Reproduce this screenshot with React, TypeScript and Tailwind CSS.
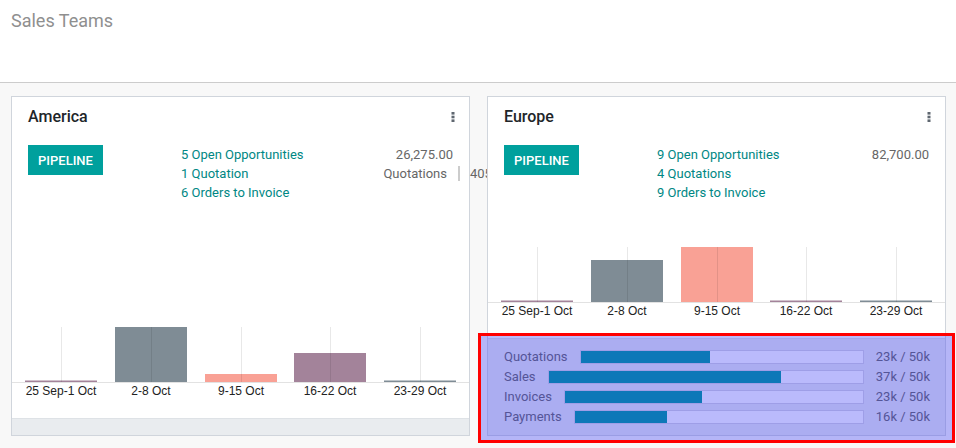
import React from 'react'

type Bar = { value: number; color: string }

const weeks = ['25 Sep-1 Oct', '2-8 Oct', '9-15 Oct', '16-22 Oct', '23-29 Oct']
const centers = [49, 139, 229, 318, 408]

const GRAY = '#7f8c95'
const SALMON = '#f9a195'
const MAUVE = '#a3839a'

const teams = [
  {
    name: 'America',
    links: ['5 Open Opportunities', '1 Quotation', '6 Orders to Invoice'],
    amount: '26,275.00',
    quotations: '405.00',
    bars: [
      { value: 1.5, color: MAUVE },
      { value: 55, color: GRAY },
      { value: 8, color: SALMON },
      { value: 29, color: MAUVE },
      { value: 1.5, color: GRAY },
    ] as Bar[],
    progress: null,
  },
  {
    name: 'Europe',
    links: ['9 Open Opportunities', '4 Quotations', '9 Orders to Invoice'],
    amount: '82,700.00',
    quotations: null,
    bars: [
      { value: 1.5, color: MAUVE },
      { value: 42, color: GRAY },
      { value: 55, color: SALMON },
      { value: 1.5, color: MAUVE },
      { value: 1.5, color: GRAY },
    ] as Bar[],
    progress: [
      { label: 'Quotations', value: 23, max: 50 },
      { label: 'Sales', value: 37, max: 50 },
      { label: 'Invoices', value: 23, max: 50 },
      { label: 'Payments', value: 16, max: 50 },
    ],
  },
]

function Dots() {
  return (
    <svg width="4" height="10" viewBox="0 0 4 10" className="-mr-[2px]">
      <rect x="0.5" y="0" width="3" height="2.6" fill="#5f6770" />
      <rect x="0.5" y="3.7" width="3" height="2.6" fill="#5f6770" />
      <rect x="0.5" y="7.4" width="3" height="2.6" fill="#5f6770" />
    </svg>
  )
}

function WeekChart({ bars }: { bars: Bar[] }) {
  const base = 55
  return (
    <svg width="457" height="91" viewBox="0 0 457 91" className="block">
      {bars.map((b, i) => (
        <rect key={i} x={centers[i] - 36} y={base - b.value} width="72" height={b.value} fill={b.color} />
      ))}
      {centers.map(c => (
        <line key={c} x1={c + 0.5} x2={c + 0.5} y1="0" y2={base} stroke="rgba(0,0,0,0.09)" strokeWidth="1" />
      ))}
      <line x1="0" x2="457" y1={base + 0.5} y2={base + 0.5} stroke="#e2e2e2" strokeWidth="1" />
      {weeks.map((w, i) => (
        <text key={w} x={centers[i]} y="68" textAnchor="middle" fontSize="12" fill="#222"
          fontFamily="'Liberation Sans', Arial, sans-serif">
          {w}
        </text>
      ))}
    </svg>
  )
}

export default function App() {
  return (
    <div className="min-h-screen bg-[#f8f8f8] font-[Roboto,sans-serif]">
      {/* Control panel */}
      <div className="h-[83px] bg-white border-b border-[#cccccc] pl-[11px] pt-[9px]">
        <h1 className="text-[18px] leading-[24px] text-[#8f8f8f]">Sales Teams</h1>
      </div>

      {/* Kanban */}
      <div className="grid grid-cols-2 gap-[17px] pl-[11px] pr-[10px] pt-[13px]">
        {teams.map(team => (
          <div key={team.name} className="relative flex flex-col bg-white border border-[#d0d5dc]">
            <div className="px-4 pt-[10px]">
              <div className="flex items-center justify-between h-5">
                <span className="text-[16px] leading-5 font-medium text-[#212529]">{team.name}</span>
                <Dots />
              </div>

              <div className="flex mt-[18px] text-[13px] leading-[19px]">
                <div className="w-[153px] flex-shrink-0">
                  <button className="w-[75px] h-[30px] bg-[#00a09d] text-white text-[13px] font-medium uppercase">
                    Pipeline
                  </button>
                </div>
                <div className="flex-1 flex flex-col text-[#008784]">
                  {team.links.map(l => <a key={l} className="whitespace-nowrap">{l}</a>)}
                </div>
                <div className="w-[120px] flex flex-col text-[#666]">
                  <span className="text-right">{team.amount}</span>
                  {team.quotations && (
                    <div className="flex justify-end">
                      <span>Quotations</span>
                      <span className="relative w-[6px]">
                        <span className="absolute left-[11px] top-[2px] h-[15px] border-l-2 border-[#cccccc] pl-[10px] leading-[15px] whitespace-nowrap">
                          {team.quotations}
                        </span>
                      </span>
                    </div>
                  )}
                </div>
              </div>
            </div>

            <div className="mt-auto pt-[45px]">
              <WeekChart bars={team.bars} />
            </div>

            {team.progress ? (
              <div className="relative border-t border-[#dee2e6] bg-[#e9ecef] px-4 pr-[15px] pt-[8px] pb-[8px]">
                {team.progress.map(p => (
                  <div key={p.label} className="flex h-5 items-center gap-3 text-[13px] text-[#6a6a6a]">
                    <span>{p.label}</span>
                    <div className="flex-1 h-[14px] border border-[#d6d6e0] bg-white">
                      <div className="h-full bg-[#009e9b]" style={{ width: `${(p.value / p.max) * 100}%` }} />
                    </div>
                    <span className="whitespace-nowrap">{p.value}k / {p.max}k</span>
                  </div>
                ))}
                {/* highlight overlay */}
                <div className="absolute z-10 -left-[10px] -right-[10px] -top-[6px] -bottom-[8px] border-[3px] border-[#ff0000] bg-[rgba(40,40,245,0.32)]" />
              </div>
            ) : (
              <div className="h-[17px] border-t border-[#dee2e6] bg-[#e9ecef]" />
            )}
          </div>
        ))}
      </div>
    </div>
  )
}
